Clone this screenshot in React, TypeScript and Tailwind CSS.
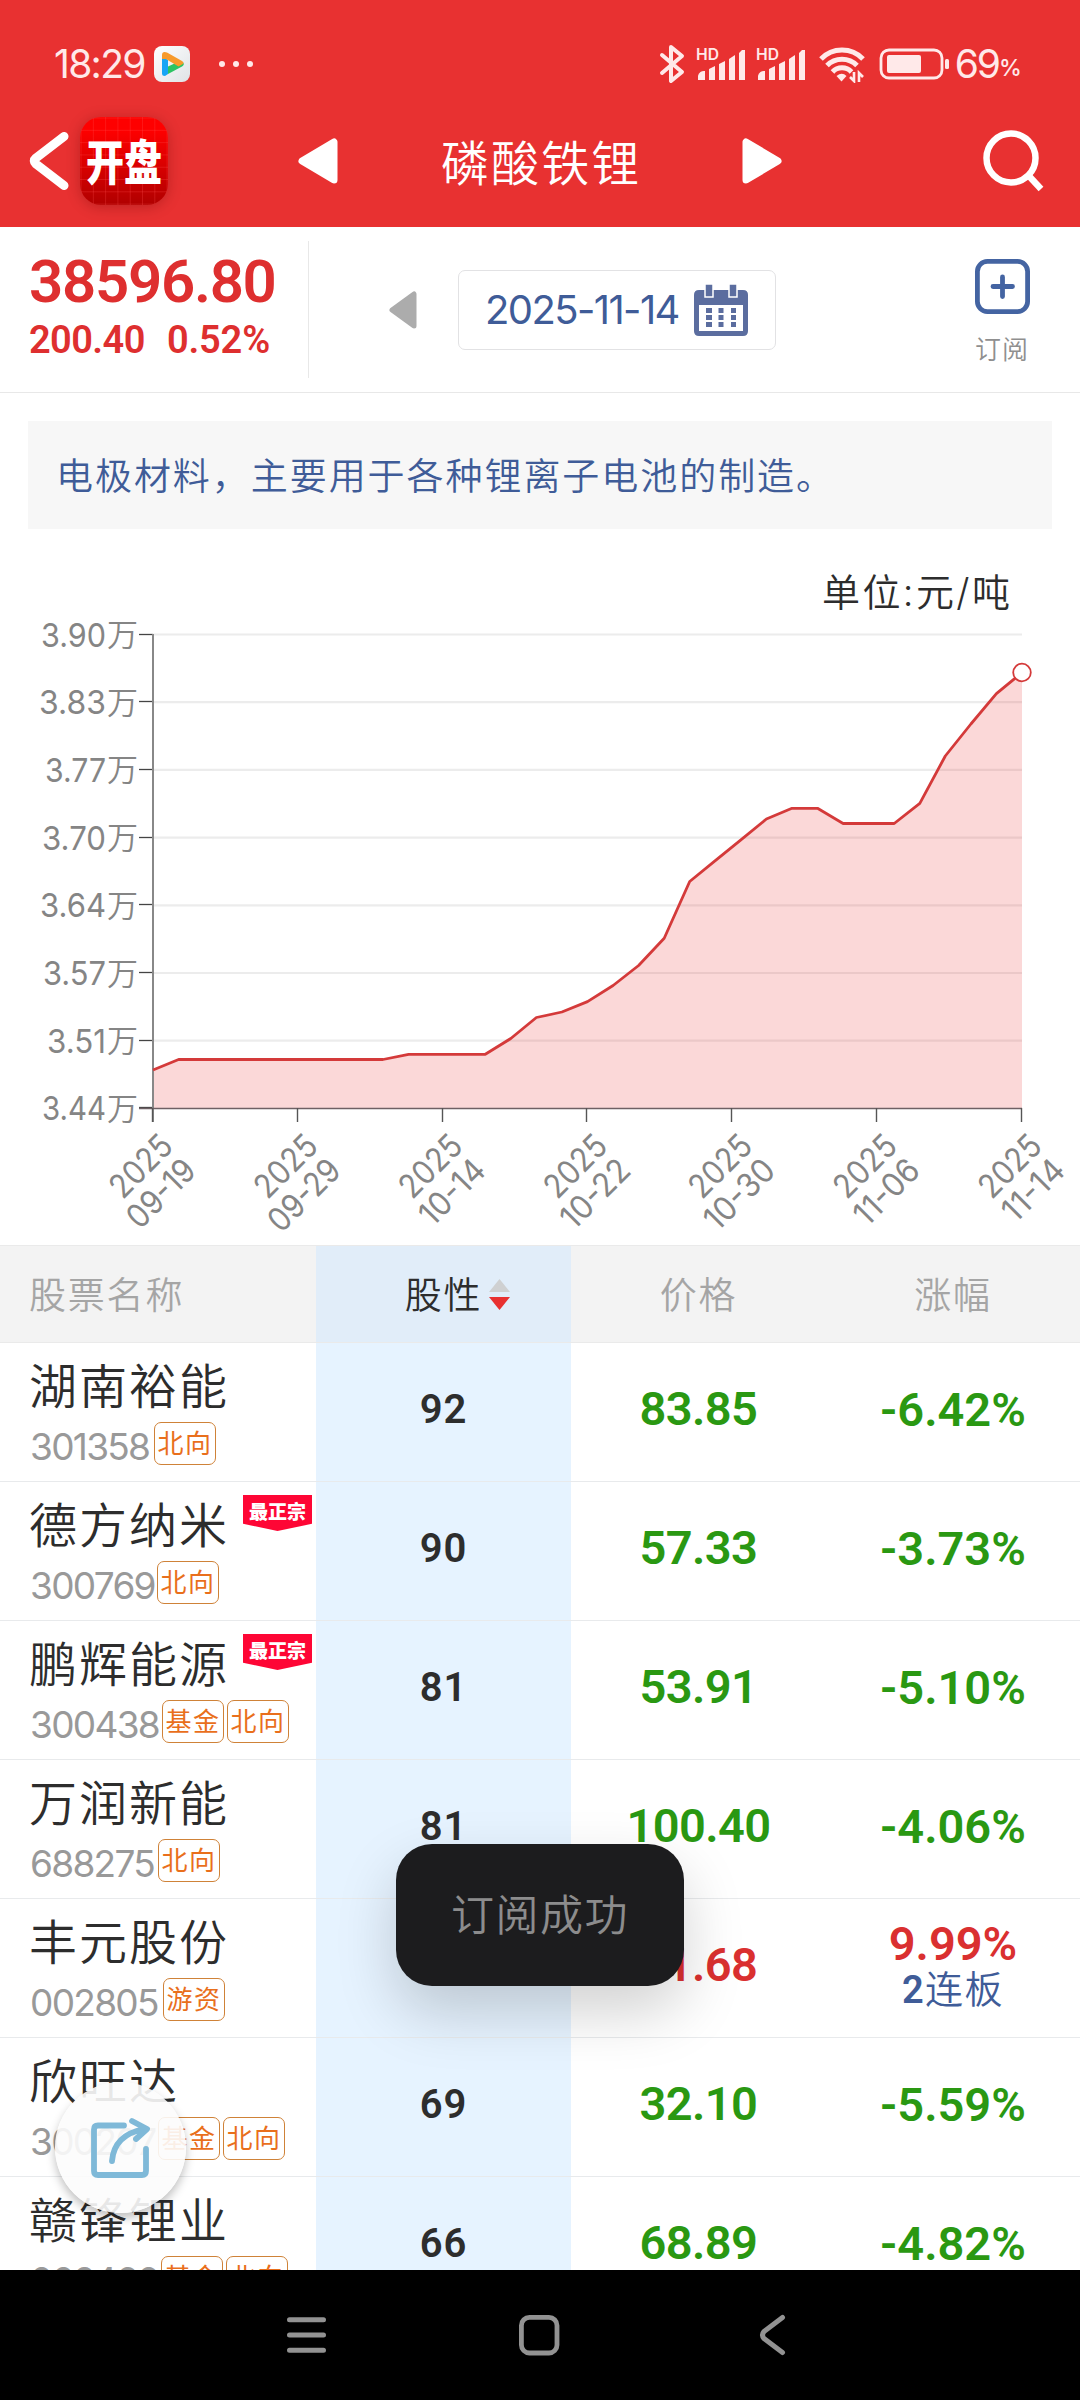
import React from "react";

const NUM = "font-['Roboto','Noto_Sans_CJK_SC',sans-serif]";
const LIGHT = "font-['Inter','Noto_Sans_CJK_SC',sans-serif]";

type Stock = {
  name: string;
  code: string;
  codeWidth: string;
  tags: string[];
  top?: boolean;
  score: string;
  price: string;
  change: string;
  up?: boolean;
  note?: string;
};

const stocks: Stock[] = [
  { name: "湖南裕能", code: "301358", codeWidth: "w-[124px]", tags: ["北向"], score: "92", price: "83.85", change: "-6.42%" },
  { name: "德方纳米", code: "300769", codeWidth: "w-[127px]", tags: ["北向"], top: true, score: "90", price: "57.33", change: "-3.73%" },
  { name: "鹏辉能源", code: "300438", codeWidth: "w-[132px]", tags: ["基金", "北向"], top: true, score: "81", price: "53.91", change: "-5.10%" },
  { name: "万润新能", code: "688275", codeWidth: "w-[128px]", tags: ["北向"], score: "81", price: "100.40", change: "-4.06%" },
  { name: "丰元股份", code: "002805", codeWidth: "w-[133px]", tags: ["游资"], score: "75", price: "21.68", change: "9.99%", up: true, note: "连板" },
  { name: "欣旺达", code: "300207", codeWidth: "w-[128px]", tags: ["基金", "北向"], score: "69", price: "32.10", change: "-5.59%" },
  { name: "赣锋锂业", code: "002460", codeWidth: "w-[131px]", tags: ["基金", "北向"], score: "66", price: "68.89", change: "-4.82%" },
];

function Signal() {
  return (
    <svg className="-mt-[6px]" width="50" height="40" viewBox="0 -6 50 40" fill="#ffe9e9">
      <text x="0" y="13" fontSize="16" fontWeight="600" fontFamily="Inter, sans-serif" textLength="23" lengthAdjust="spacingAndGlyphs">HD</text>
      <path d="M2 33v-4a6 6 0 0 1 7-5v9zM13 33V22l6-3v14zM23 33V17l6-3v19zM33 33V12l6-4v25zM43 33V6l3-3h3v30z" />
    </svg>
  );
}

function StatusBar() {
  return (
    <div className="flex h-[96px] items-center pt-[31px] pl-[54px] pr-[61px] text-[#ffe9e9]">
      <span className={`${LIGHT} w-[100px] text-[39px] leading-none tracking-[-1.700px]`}>18:29</span>
      <svg width="36" height="36" viewBox="0 0 36 36">
        <defs>
          <linearGradient id="tile" x1="0" y1="0" x2="1" y2="1">
            <stop offset="0" stopColor="#fff" />
            <stop offset="1" stopColor="#dfe3e6" />
          </linearGradient>
        </defs>
        <rect width="36" height="36" rx="8" fill="url(#tile)" />
        <path d="M8 10v17.500q0 2.500 3 2.500l3-2V14z" fill="#16a5f5" />
        <path d="M14 20.500V28l14-7.500q3-2 1-4l-3-1.500z" fill="#2bc463" />
        <path d="M8 13V9q0-4 5-2.500l15 8.500q3 2 0 3.500l-3.500 2L12 13z" fill="#f79a2b" />
      </svg>
      <svg className="ml-[29px]" width="34" height="8" viewBox="0 0 34 8" fill="#ffe9e9">
        <circle cx="3" cy="4" r="3" />
        <circle cx="17" cy="4" r="3" />
        <circle cx="31" cy="4" r="3" />
      </svg>
      <div className="ml-auto flex items-center">
        <svg width="26" height="40" viewBox="0 0 26 40" fill="none" stroke="#ffe9e9" strokeWidth="4" strokeLinecap="round" strokeLinejoin="round">
          <path d="M3 11l20 17-11 9V3l11 9L3 29" />
        </svg>
        <div className="ml-[11px]"><Signal /></div>
        <div className="ml-[10px]"><Signal /></div>
        <svg className="ml-[12px]" width="48" height="38" viewBox="0 0 48 38" fill="none" stroke="#ffe9e9" strokeWidth="5">
          <path d="M3 14a29 29 0 0 1 42 0" />
          <path d="M9 20.500a21 21 0 0 1 30 0" />
          <path d="M14.500 27a13 13 0 0 1 19 0" />
          <path d="M18.500 31q5.500-4.500 10 0l-5 5.500z" fill="#ffe9e9" stroke="none" />
          <path d="M36 27v9l-4-4M41 37v-9l4 4" strokeWidth="2.600" />
        </svg>
        <svg className="ml-[13px]" width="71" height="32" viewBox="0 0 71 32" fill="none">
          <rect x="2" y="2" width="61" height="28" rx="8" stroke="#ffe9e9" strokeWidth="2.800" />
          <rect x="8" y="7" width="34" height="18" rx="2" fill="#ffe9e9" />
          <rect x="66" y="11" width="4" height="10" rx="1.500" fill="#ffe9e9" />
        </svg>
        <span className={`${LIGHT} ml-[5px] text-[39px] leading-none tracking-[-2px]`}>69</span>
        <span className={`${LIGHT} mt-[9px] w-[20px] text-[23px] font-medium leading-none tracking-[-1px]`}>%</span>
      </div>
    </div>
  );
}

function Triangle({ flip = false }: { flip?: boolean }) {
  return (
    <svg className={flip ? "-scale-x-100" : ""} width="42" height="48" viewBox="0 0 42 48">
      <path d="M5 24L37 5v38z" fill="#fff" stroke="#fff" strokeWidth="7" strokeLinejoin="round" />
    </svg>
  );
}

function TitleBar() {
  return (
    <div className="flex h-[130px] items-center pl-[28px] pr-[36px]">
      <svg width="42" height="60" viewBox="0 0 42 60" fill="none" stroke="#fff" strokeWidth="9" strokeLinecap="round" strokeLinejoin="round">
        <path d="M36 5.500L8 27Q4.500 30 8 33L36 54.500" />
      </svg>
      <div className="ml-[10px] flex size-[88px] items-center justify-center rounded-[21px] bg-[linear-gradient(to_right,transparent_11.300px,#ff505045_11.300px),linear-gradient(to_bottom,transparent_11.300px,#ff505045_11.300px),linear-gradient(#fe0000_15%,#b00000)] bg-[size:12.300px_12.300px,12.300px_12.300px,100%_100%] bg-[position:1.500px_0,0_1.500px,0_0] shadow-[0_2px_14px_rgba(90,0,0,0.3)]">
        <span className="-mt-[3px] scale-y-[1.25] text-[38px] font-black leading-none text-white">开盘</span>
      </div>
      <div className="ml-[129px]"><Triangle /></div>
      <h1 className="-mt-[2px] ml-[102px] text-[48px] font-[350] leading-none tracking-[2.100px] text-white">磷酸铁锂</h1>
      <div className="ml-[100px]"><Triangle flip /></div>
      <svg className="ml-auto" width="62" height="62" viewBox="0 0 62 62" fill="none" stroke="#fff" strokeWidth="6.500">
        <circle cx="29" cy="28" r="24.500" />
        <path d="M47 46l12 13" />
      </svg>
    </div>
  );
}

function Quote() {
  return (
    <section className="flex h-[166px] items-center border-b border-[#e8e8e8]">
      <div className={`${NUM} flex h-[137px] w-[309px] flex-col border-r border-[#e8e8e8] pl-[29px] font-semibold text-[#de2f2f]`}>
        <span className="mt-[11px] text-[60px] leading-[60px] tracking-[-1.300px]">38596.80</span>
        <div className="mt-[8px] flex text-[38px] leading-[40px] tracking-[-0.600px]">
          <span className="w-[138px]">200.40</span>
          <span className="tracking-[-0.200px]">0.52%</span>
        </div>
      </div>
      <svg className="ml-[79px]" width="30" height="40" viewBox="0 0 30 40">
        <path d="M4 20L26 4v32z" fill="#acacac" stroke="#acacac" strokeWidth="5" strokeLinejoin="round" />
      </svg>
      <div className="ml-[40px] flex h-[80px] w-[318px] items-center rounded-[7px] border border-[#e2e2e4] pl-[26px]">
        <span className={`${LIGHT} w-[209px] whitespace-nowrap text-[40px] leading-none tracking-[-1.600px] text-[#3f5c98]`}>2025-11-14</span>
        <svg width="54" height="52" viewBox="0 0 54 52">
          <path d="M5 6h44q5 0 5 5v36q0 5-5 5H5q-5 0-5-5V11q0-5 5-5z" fill="#5b6d9f" />
          <path d="M5 21h44v26H5z" fill="#fff" />
          <path d="M11 0h8v13h-8zM35 0h8v13h-8z" fill="#5b6d9f" stroke="#fff" strokeWidth="1.500" />
          <path d="M12 24h6v5h-6zM24.500 24h5v5h-5zM37 24h5v5h-5zM12 31h6v5h-6zM24.500 31h5v5h-5zM37 31h5v5h-5zM12 38h6v5h-6zM24.500 38h5v5h-5zM37 38h5v5h-5z" fill="#5b6d9f" />
        </svg>
      </div>
      <div className="mt-[2px] mr-[48px] ml-auto flex w-[60px] flex-col items-center">
        <svg width="55" height="55" viewBox="0 0 55 55" fill="none" stroke="#4464a2" strokeWidth="4.800" strokeLinecap="round">
          <rect x="2.400" y="2.400" width="50.200" height="50.200" rx="10" />
          <path d="M27.500 18v19.500M18 27.500h19.500" />
        </svg>
        <span className="mt-[19px] text-[26px] leading-[30px] font-[350] tracking-[1px] text-[#8f8f8f]">订阅</span>
      </div>
    </section>
  );
}

const X0 = 153;
const STEP = 869 / 34;
const ys = [
  1070, 1059.5, 1059.5, 1059.5, 1059.5, 1059.5, 1059.5, 1059.5, 1059.5, 1059.5, 1054.3, 1054.3, 1054.3, 1054.3,
  1038.5, 1017.5, 1012, 1001.6, 985.5, 965.5, 938.2, 881.5, 860.7, 839.8, 819, 808.3, 808.3, 823.5, 823.5, 823.5,
  803.4, 756, 724, 693.6, 672.6,
];
const yLabels = ["3.90", "3.83", "3.77", "3.70", "3.64", "3.57", "3.51", "3.44"];
const yStarts = [41, 39, 45, 42, 40, 43, 47, 42];
const xLabels: [string, number][] = [["09-19", 82], ["09-29", 87], ["10-14", 78], ["10-22", 83], ["10-30", 85], ["11-06", 78], ["11-14", 73]];

function PriceChart() {
  const line = ys.map((y, i) => `${(X0 + i * STEP).toFixed(1)},${y}`).join(" ");
  return (
    <svg className="block" width="1080" height="716" viewBox="0 529 1080 716" fontFamily="Inter, 'Noto Sans CJK SC', sans-serif">
      <text x="1010" y="606" textAnchor="end" fontSize="38" fontWeight="350" fill="#2d2d2d" textLength="188">单位:元/吨</text>
      {yLabels.map((l, i) => {
        const y = 634.5 + i * 67.7;
        return (
          <g key={l}>
            {i < 7 && <path d={`M153 ${y}H1022`} stroke="#ececec" strokeWidth="2.200" />}
            <path d={`M139 ${Math.round(y) - 0.5}H153`} stroke="#444" strokeWidth="1.300" />
            <text x={yStarts[i]} y={y + 12} fontSize="33" fill="#858585" textLength={106 - yStarts[i]} lengthAdjust="spacingAndGlyphs">{l}</text>
            <text x="107" y={y + 11.5} fontSize="31" fontWeight="350" fill="#858585">万</text>
          </g>
        );
      })}
      <polygon points={`153,1108 ${line} 1022,1108`} fill="#e83030" fillOpacity="0.19" />
      <path d="M153 634V1122" stroke="#888" strokeWidth="2" />
      <path d="M139 1108.500H1022" stroke="#6e6064" strokeWidth="1.600" />
      <polyline points={line} fill="none" stroke="#d43a3a" strokeWidth="2.800" strokeLinejoin="bevel" />
      <circle cx="1022" cy="672.500" r="8.800" fill="#fff" stroke="#d43a3a" strokeWidth="1.800" />
      {xLabels.map(([l, w], i) => {
        const x = 153 + i * 144.83;
        return (
          <g key={l} fill="#858585" fontSize="33">
            <path d={`M${Math.round(x) - 0.5} 1108V1122`} stroke="#555" strokeWidth="1.400" />
            <text transform={`translate(${x + 22} 1148) rotate(-45)`} textAnchor="end" textLength="74" lengthAdjust="spacingAndGlyphs">2025</text>
            <text transform={`translate(${x + 45} 1172.500) rotate(-45)`} textAnchor="end" textLength={w} lengthAdjust="spacingAndGlyphs">{l}</text>
          </g>
        );
      })}
    </svg>
  );
}

function TableHead() {
  return (
    <div className="flex h-[98px] border-y border-[#eaeaea] bg-[#f3f3f3] text-[37px] font-[350] leading-none tracking-[1.800px] text-[#a5a5a5]">
      <div className="flex w-[316px] items-center pb-[2px] pl-[29px]">股票名称</div>
      <div className="flex w-[255px] items-center justify-center bg-[#e1edf9] pb-[2px] text-[#2d2d2d]">
        <span className="relative">
          股性
          <svg className="absolute top-[4px] left-[84px]" width="21" height="32" viewBox="0 0 21 32">
            <path d="M10.500 0L21 13H0z" fill="#cfd0d1" />
            <path d="M0 18h21L10.500 31z" fill="#e83030" />
          </svg>
        </span>
      </div>
      <div className="flex w-[255px] items-center justify-center pb-[2px]">价格</div>
      <div className="flex w-[254px] items-center justify-center pb-[2px]">涨幅</div>
    </div>
  );
}

function Row({ s }: { s: Stock }) {
  const tone = s.up ? "text-[#da3030]" : "text-[#2a9812]";
  return (
    <div className="flex h-[139px] shrink-0 border-b border-[#e8eaec]">
      <div className="relative w-[316px] pt-[15px] pl-[29px]">
        <div className="h-[50px] text-[48px] font-[350] leading-[50px] tracking-[2px] text-[#2d2d2d]">{s.name}</div>
        <div className="mt-[14px] flex h-[43px]">
          <span className={`${LIGHT} ${s.codeWidth} ml-px shrink-0 whitespace-nowrap text-[37px] leading-[49px] tracking-[-1.700px] text-[#999]`}>{s.code}</span>
          <div className="flex gap-[3px]">
            {s.tags.map((t) => (
              <span key={t} className="h-[43px] w-[62px] shrink-0 rounded-[7px] border-[1.500px] border-[#cf8238] text-center text-[26px] leading-[37px] tracking-[1.500px] text-[#e96f1c]">{t}</span>
            ))}
          </div>
        </div>
        {s.top && (
          <div className="absolute top-[13px] left-[243px] h-[36px] w-[69px] bg-[#fe0635] text-center text-[19px] font-black leading-[32px] text-white [clip-path:polygon(0_0,100%_0,100%_80%,50%_100%,0_80%)]">最正宗</div>
        )}
      </div>
      <div className={`${NUM} flex w-[255px] items-center justify-center bg-[#e6f3ff] pb-[4px] text-[40px] font-semibold tracking-[0.800px] text-[#2d2d2d]`}>{s.score}</div>
      <div className={`${NUM} flex w-[255px] items-center justify-center pb-[6px] text-[47px] font-semibold tracking-[-0.600px] ${tone}`}>{s.price}</div>
      <div className={`${NUM} flex w-[254px] flex-col items-center justify-center font-semibold ${s.note ? "pb-[3px]" : "pb-[6px]"} ${tone}`}>
        <span className="text-[47px] leading-[47px]">{s.change}</span>
        {s.note && (
          <span className="text-[38px] leading-[46px] tracking-[1.500px] text-[#3f5c98]">2<span className="font-[350]">{s.note}</span></span>
        )}
      </div>
    </div>
  );
}

export default function App() {
  return (
    <main className="relative flex h-[2400px] w-[1080px] flex-col overflow-hidden bg-white font-['Noto_Sans_CJK_SC',sans-serif]">
      <header className="h-[227px] shrink-0 bg-[#e83131]">
        <StatusBar />
        <TitleBar />
      </header>
      <Quote />
      <p className="mx-[28px] mt-[28px] h-[108px] shrink-0 bg-[#f7f7f7] pl-[28px] text-[37px] font-[350] leading-[106px] tracking-[1.950px] text-[#3f5c98]">
        电极材料，主要用于各种锂离子电池的制造。
      </p>
      <div className="shrink-0"><PriceChart /></div>
      <section className="flex h-[1025px] shrink-0 flex-col overflow-hidden">
        <div className="shrink-0"><TableHead /></div>
        {stocks.map((s) => <Row key={s.code} s={s} />)}
      </section>

      <nav className="flex h-[130px] shrink-0 items-center bg-black pl-[286px]">
        <svg width="40" height="36" viewBox="0 0 40 36" stroke="#929292" strokeWidth="5" strokeLinecap="round">
          <path d="M3.500 2.700h34M3.500 18h34M3.500 33.300h34" />
        </svg>
        <svg className="ml-[192px]" width="42" height="42" viewBox="0 0 42 42" fill="none" stroke="#929292" strokeWidth="4.800">
          <rect x="3.400" y="3.400" width="35.600" height="35.600" rx="8" />
        </svg>
        <svg className="ml-[198px]" width="30" height="42" viewBox="0 0 30 42" fill="none" stroke="#929292" strokeWidth="5" strokeLinecap="round" strokeLinejoin="round">
          <path d="M24.500 3.500L6 17.500Q3 21 6 24.500L24.500 38.500" />
        </svg>
      </nav>

      <div className="absolute top-[1844px] left-[396px] flex h-[142px] w-[288px] items-center justify-center rounded-[36px] bg-[#1c1c1e] pb-[5px] text-[43px] font-[350] leading-none tracking-[1.500px] text-[#8c8c8d] shadow-[0_26px_60px_rgba(0,0,0,0.18)]">
        订阅成功
      </div>

      <button className="absolute top-[2082px] left-[55px] flex size-[131px] items-center justify-center rounded-full bg-[#fcfcfc]/90 shadow-[0_5px_10px_rgba(0,0,0,0.25)]">
        <svg className="-ml-[2px]" width="60" height="62" viewBox="0 0 60 62" fill="none" stroke="#7fb9d8" strokeWidth="5.800" strokeLinecap="round" strokeLinejoin="round">
          <path d="M34 8.500H8Q4 8.500 4 12.500V54q0 4 4 4h44q4 0 4-4V32" />
          <path d="M22 44Q24 18 54 12M42 4l15 8-11 10" />
        </svg>
      </button>
    </main>
  );
}
